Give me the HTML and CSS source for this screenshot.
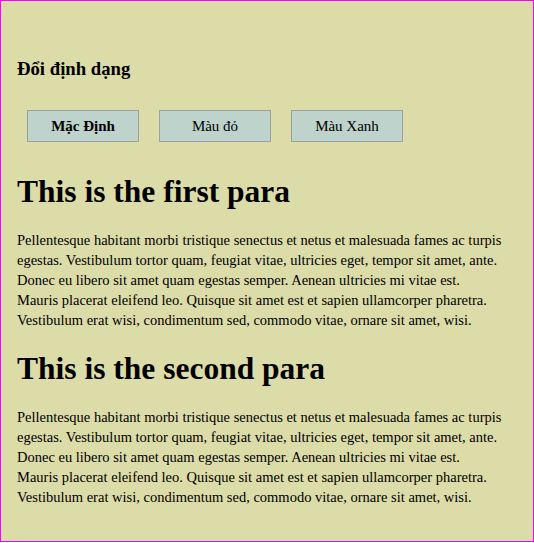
FILE: index.html
```html
<!DOCTYPE html>
<html lang="vi">
<head>
<meta charset="utf-8">
<title>Đổi định dạng</title>
<link rel="stylesheet" href="styles.css">
</head>
<body>
<div class="page">
  <h3 class="title">Đổi định dạng</h3>
  <div class="buttons">
    <button class="btn btn-default">Mặc Định</button>
    <button class="btn">Màu đỏ</button>
    <button class="btn">Màu Xanh</button>
  </div>
  <h1 class="heading">This is the first para</h1>
  <p class="text">Pellentesque habitant morbi tristique senectus et netus et malesuada fames ac turpis egestas. Vestibulum tortor quam, feugiat vitae, ultricies eget, tempor sit amet, ante. Donec eu libero sit amet quam egestas semper. Aenean ultricies mi vitae est. Mauris placerat eleifend leo. Quisque sit amet est et sapien ullamcorper pharetra. Vestibulum erat wisi, condimentum sed, commodo vitae, ornare sit amet, wisi.</p>
  <h1 class="heading">This is the second para</h1>
  <p class="text">Pellentesque habitant morbi tristique senectus et netus et malesuada fames ac turpis egestas. Vestibulum tortor quam, feugiat vitae, ultricies eget, tempor sit amet, ante. Donec eu libero sit amet quam egestas semper. Aenean ultricies mi vitae est. Mauris placerat eleifend leo. Quisque sit amet est et sapien ullamcorper pharetra. Vestibulum erat wisi, condimentum sed, commodo vitae, ornare sit amet, wisi.</p>
</div>
</body>
</html>
```

FILE: styles.css
```css
html, body {
  margin: 0;
  padding: 0;
}
body {
  font-family: "Liberation Serif", "Times New Roman", serif;
  color: #000;
  background: #fff;
}
.page {
  box-sizing: border-box;
  width: 534px;
  height: 542px;
  border: 1px solid #ff00ff;
  background: #dcdca9;
  padding: 57px 30px 0 16px;
  overflow: hidden;
}
.title {
  margin: 0;
  font-size: 18.72px;
  font-weight: bold;
  line-height: 22px;
}
.buttons {
  display: flex;
  gap: 20px;
  margin: 30px 0 0 10px;
}
.btn {
  box-sizing: border-box;
  width: 112px;
  height: 32px;
  background: #bdd3cc;
  border: 1px solid #a0a0a0;
  font-family: "Liberation Serif", "Times New Roman", serif;
  font-size: 15px;
  color: #000;
  padding: 0;
}
.btn-default {
  font-weight: bold;
}
.heading {
  margin: 31px 0 0 0;
  font-size: 31.5px;
  font-weight: bold;
  line-height: 37px;
}
.text {
  margin: 20px 0 0 0;
  font-size: 14.5px;
  line-height: 20px;
}
.text + .heading {
  margin-top: 20px;
}
```
